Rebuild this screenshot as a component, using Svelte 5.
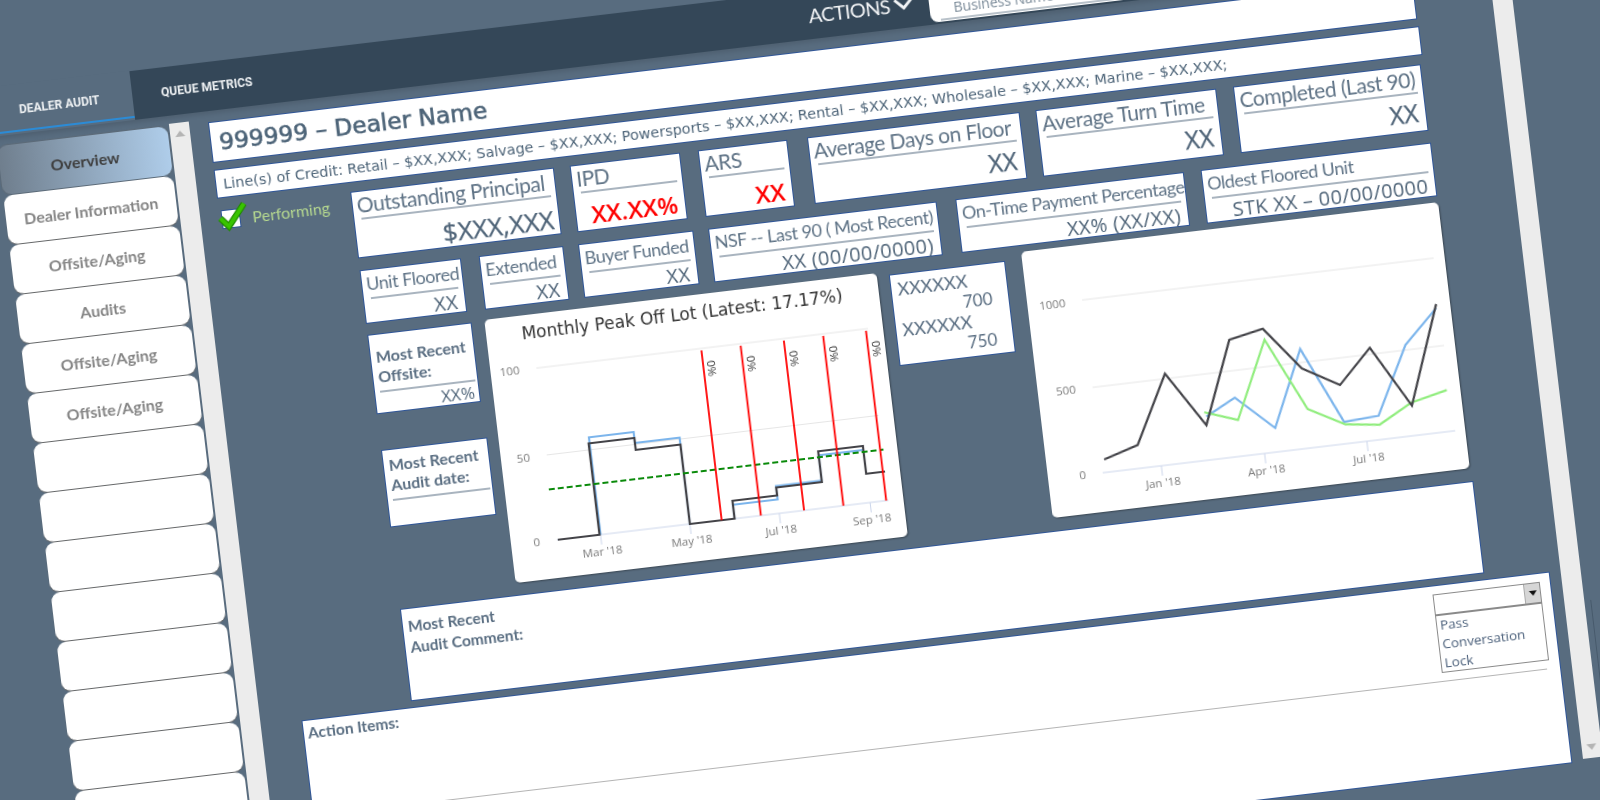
<script>
  const sideItems = ['Overview', 'Dealer Information', 'Offsite/Aging', 'Audits', 'Offsite/Aging', 'Offsite/Aging', '', '', '', '', '', '', '', '', ''];

  const topRow = [
    { title: 'Outstanding Principal', value: '$XXX,XXX', w: 205, gap: 0, size: 'lg' },
    { title: 'IPD', value: 'XX.XX%', w: 111, gap: 16, alert: true },
    { title: 'ARS', value: 'XX', w: 90, gap: 18, alert: true },
    { title: 'Average Days on Floor', value: 'XX', w: 214, gap: 20 },
    { title: 'Average Turn Time', value: 'XX', w: 182, gap: 16 },
    { title: 'Completed (Last 90)', value: 'XX', w: 189, gap: 17 }
  ];

  const secondRow = [
    { title: 'Unit Floored', value: 'XX', w: 102, gap: 0 },
    { title: 'Extended', value: 'XX', w: 85, gap: 18 },
    { title: 'Buyer Funded', value: 'XX', w: 116, gap: 15 },
    { title: 'NSF -- Last 90 ( Most Recent)', value: 'XX (00/00/0000)', w: 230, gap: 15 },
    { title: 'On-Time Payment Percentage', value: 'XX% (XX/XX)', w: 230, gap: 19 },
    { title: 'Oldest Floored Unit', value: 'STK XX – 00/00/0000', w: 232, gap: 17 }
  ];

  const redLines = [212, 251.5, 295, 334.6, 377.7];

  const peakTicks = [
    { x: 90, label: "Mar '18" },
    { x: 180, label: "May '18" },
    { x: 270, label: "Jul '18" },
    { x: 361.5, label: "Sep '18" }
  ];

  const volumeTicks = [
    { x: 114, label: "Jan '18" },
    { x: 218, label: "Apr '18" },
    { x: 321, label: "Jul '18" }
  ];

  const volumeDark = '58,216 93,205.6 128.5,138 163.6,194 196.4,112 231,105 265,149 301,170 335,136.5 370,199 406,101';
  const volumeBlue = '164.6,185.6 195,170 231.6,205 265.7,129.5 300.7,207 335.7,205 370.7,138 405.5,105';
  const volumeGreen = '163,181 195.6,192.6 231.4,116 266,190 301.7,209.6 335.7,214 369.4,196 406.4,187.6';
</script>

<div class="stage">
  <header class="topbar">
    <div class="tab active">DEALER AUDIT</div>
    <div class="darkbar">
      <div class="tab">QUEUE METRICS</div>
      <div class="actions">
        <span>ACTIONS</span>
        <svg width="22" height="14" viewBox="0 0 22 14"><path d="M2 2l9 9 9-9" fill="none" stroke="#f2f4f6" stroke-width="3" /></svg>
      </div>
      <div class="search">
        <div class="search-field">Business Name</div>
      </div>
    </div>
  </header>

  <div class="content">
    <aside class="sidebar">
      <div class="side-list">
        {#each sideItems as item, i}
          <div class="side-item" class:selected={i === 0}>{item}</div>
        {/each}
      </div>
      <div class="scroller left">
        <svg class="arrow" width="10" height="6" viewBox="0 0 10 6"><path d="M5 0l5 6H0z" fill="#b4b4b4" /></svg>
      </div>
    </aside>

    <main class="main">
      <div class="box name">999999 – Dealer Name</div>
      <div class="box credit">Line(s) of Credit: Retail – $XX,XXX; Salvage – $XX,XXX; Powersports – $XX,XXX; Rental – $XX,XXX; Wholesale – $XX,XXX; Marine – $XX,XXX;</div>

      <div class="overview">
        <div class="status">
          <div class="checkbox">
            <svg class="check" width="20" height="20" viewBox="0 0 20 20">
              <path d="M-2 7l7.6 9L23 -5" fill="none" stroke="#1f8a00" stroke-width="6.5" />
              <path d="M-2 7l7.6 9L23 -5" fill="none" stroke="#39c400" stroke-width="4" />
            </svg>
          </div>
          <span>Performing</span>
        </div>

        <div class="stats">
          <div class="row top">
            {#each topRow as t}
              <div class="tile" style:width="{t.w}px" style:margin-left="{t.gap}px">
                <div class="tile-title">{t.title}</div>
                <div class="tile-value" class:lg={t.size === 'lg'} class:alert={t.alert}>{t.value}</div>
              </div>
            {/each}
          </div>

          <div class="row second">
            {#each secondRow as t}
              <div class="tile" style:width="{t.w}px" style:margin-left="{t.gap}px">
                <div class="tile-title">{t.title}</div>
                <div class="tile-value">{t.value}</div>
              </div>
            {/each}
          </div>

          <div class="row third">
            <div class="notes">
              <div class="note offsite">
                <div class="note-title">Most Recent<br />Offsite:</div>
                <div class="note-value">XX%</div>
              </div>
              <div class="note audit">
                <div class="note-title">Most Recent<br />Audit date:</div>
              </div>
            </div>

            <div class="chart peak">
              <svg width="395" height="265" viewBox="0 0 395 265">
                <text class="chart-title" x="197" y="24" text-anchor="middle">Monthly Peak Off Lot (Latest: 17.17%)</text>
                <line class="grid" x1="46" y1="54" x2="380" y2="54" />
                <line class="grid" x1="46" y1="141.5" x2="380" y2="141.5" />
                <line class="axis" x1="46" y1="227" x2="380" y2="227" />
                <text class="tick" x="29" y="58" text-anchor="end">100</text>
                <text class="tick" x="29" y="146" text-anchor="end">50</text>
                <text class="tick" x="29" y="231" text-anchor="end">0</text>
                {#each peakTicks as t}
                  <line class="axis" x1={t.x} y1="227" x2={t.x} y2="237" />
                  <text class="tick" x={t.x} y="248" text-anchor="middle">{t.label}</text>
                {/each}
                <polyline class="series blue" points="90,227 90,129 135,129 135,140 180,140 180,227 225,227 225,213 270,213 270,199.5 316,199.5 316,174 361,174" />
                <polyline class="series dark" points="47,227 89,227 89,135 135,135 135,147 180,147 180,227 225,227 225,209 270,209 270,201 316,201 316,170 361,170 361,198 380,198" />
                <line class="target" x1="44" y1="176" x2="381" y2="176" />
                {#each redLines as x}
                  <line class="marker" x1={x} y1="56" x2={x} y2="227" />
                  <text class="marker-label" transform="translate({x + 4} 67) rotate(90)">0%</text>
                {/each}
              </svg>
            </div>

            <div class="codes">
              <div>XXXXXX</div>
              <div class="code-num">700</div>
              <div>XXXXXX</div>
              <div class="code-num">750</div>
            </div>

            <div class="chart volume">
              <svg width="420" height="268" viewBox="0 0 420 268">
                <line class="grid" x1="55" y1="55" x2="409" y2="55" />
                <line class="grid" x1="55" y1="143" x2="409" y2="143" />
                <line class="axis" x1="55" y1="229" x2="410" y2="229" />
                <text class="tick" x="38" y="60" text-anchor="end">1000</text>
                <text class="tick" x="38" y="147" text-anchor="end">500</text>
                <text class="tick" x="38" y="233" text-anchor="end">0</text>
                {#each volumeTicks as t}
                  <line class="axis" x1={t.x} y1="229" x2={t.x} y2="239" />
                  <text class="tick" x={t.x} y="250" text-anchor="middle">{t.label}</text>
                {/each}
                <polyline class="series blue" points={volumeBlue} />
                <polyline class="series green" points={volumeGreen} />
                <polyline class="series dark" points={volumeDark} />
              </svg>
            </div>
          </div>

          <div class="box comment">Most Recent<br />Audit Comment:</div>
        </div>
      </div>

      <div class="box actions-box">
        <div>Action Items:</div>
        <div class="rule"></div>
        <div class="dropdown">
          <div class="dropdown-field">
            <div class="dropdown-btn"><svg width="8" height="5" viewBox="0 0 8 5"><path d="M0 0h8L4 5z" fill="#111" /></svg></div>
          </div>
          <div class="dropdown-list">
            <div>Pass</div>
            <div>Conversation</div>
            <div>Lock</div>
          </div>
        </div>
      </div>
    </main>

    <div class="scroller right">
      <svg class="arrow down" width="10" height="6" viewBox="0 0 10 6"><path d="M0 0h10L5 6z" fill="#b4b4b4" /></svg>
    </div>
  </div>
</div>

<style>
  :global(html), :global(body) {
    margin: 0;
    overflow: hidden;
    background: #586c7f;
  }

  .stage {
    width: 1560px;
    padding-top: 86px;
    transform: rotate(-6.8deg) translateX(-30px);
    transform-origin: 0 0;
    font-family: Lato, sans-serif;
    color: #5a6e82;
    filter: blur(0.3px);
  }

  /* top bar */
  .topbar {
    display: flex;
    height: 49px;
    box-shadow: 0 3px 5px rgba(0, 0, 0, 0.12);
  }

  .tab {
    width: 150px;
    height: 47px;
    flex: none;
    display: flex;
    align-items: center;
    justify-content: center;
    padding-top: 3px;
    box-sizing: border-box;
    font: 700 12px Roboto, sans-serif;
    color: #eef1f3;
  }

  .tab.active {
    border-bottom: 2px solid #2b8bd6;
    padding: 4px 0 0 3px;
  }

  .darkbar {
    flex: 1;
    display: flex;
    background: #344758;
  }

  .actions {
    margin-left: 531px;
    width: 106px;
    flex: none;
    height: 46px;
    padding-top: 4px;
    box-sizing: border-box;
    display: flex;
    align-items: center;
    gap: 3px;
    font-size: 20px;
    letter-spacing: -0.6px;
    color: #f2f4f6;
  }

  .search {
    margin-left: 15px;
    width: 482px;
    height: 47px;
    background: #fff;
    border-radius: 0 0 8px 8px;
    box-sizing: border-box;
    padding: 24px 10px 0;
  }

  .search-field {
    border-bottom: 2px solid #b9c2ca;
    height: 20px;
    padding-left: 14px;
    font: 14px "Open Sans", sans-serif;
    color: #7a8a98;
  }

  .content {
    display: flex;
    align-items: stretch;
  }

  /* left menu */
  .sidebar {
    display: flex;
    width: 193px;
    margin-left: 10px;
    margin-top: 8px;
    flex: none;
  }

  .side-list {
    width: 171px;
    padding-top: 2px;
    margin-right: 2px;
  }

  .side-item {
    height: 49px;
    margin-bottom: 1px;
    background: #fff;
    border-radius: 9px;
    box-shadow: 0 1px 1px #666;
    display: flex;
    align-items: center;
    justify-content: center;
    font-size: 16px;
    font-weight: 700;
    color: #858585;
  }

  .side-item.selected {
    background: linear-gradient(90deg, #6f7e8d, #afcdea);
    color: #3f3f3f;
    box-shadow: 0 0 2px #666;
  }

  .scroller {
    width: 20px;
    flex: none;
    background: #ececec;
    position: relative;
  }

  .arrow {
    position: absolute;
    left: 5px;
    top: 8px;
  }

  .arrow.down {
    top: auto;
    bottom: 8px;
  }

  .scroller.right {
    margin: 8px 0 3px 11px;
  }

  .scroller.right::after {
    content: '';
    position: absolute;
    left: 26px;
    top: 641px;
    width: 1px;
    height: 200px;
    background: #46596b;
  }

  /* main column */
  .main {
    width: 1279px;
    flex: none;
    margin-left: 19px;
    padding-top: 11px;
  }

  .box {
    background: #fff;
    border: 1px solid #2f5597;
    box-sizing: border-box;
  }

  .name {
    width: 1213px;
    height: 41px;
    margin-bottom: 7px;
    padding-left: 8px;
    font: 23.4px/40px "DejaVu Sans", sans-serif;
    -webkit-text-stroke: 0.6px #4d6478;
    color: #4d6478;
  }

  .credit {
    width: 1214px;
    height: 29px;
    margin-bottom: 9px;
    padding-left: 7px;
    font: 14.45px/28px "DejaVu Sans", sans-serif;
    color: #4d6478;
    white-space: nowrap;
  }

  .overview {
    display: flex;
  }

  .status {
    width: 133px;
    flex: none;
    display: flex;
    align-items: flex-start;
    gap: 12px;
    padding-top: 3px;
    font-size: 16px;
    line-height: 20px;
    color: #b5d88f;
  }

  .status span {
    white-space: nowrap;
  }

  .checkbox {
    width: 19px;
    height: 19px;
    margin-left: 2px;
    background: #fff;
    border: 1px solid #2f5597;
    box-sizing: border-box;
    position: relative;
    flex: none;
  }

  .check {
    position: absolute;
    left: 0;
    top: 0;
    overflow: visible;
  }

  .stats {
    width: 1081px;
  }

  .row {
    display: flex;
    align-items: flex-start;
  }

  .row.second {
    margin-top: 12px;
  }

  .tile {
    background: #fff;
    border: 1px solid #2f5597;
    box-sizing: border-box;
    flex: none;
    padding: 0 5px 0 7px;
  }

  .top .tile {
    height: 67px;
  }

  .second .tile {
    height: 54px;
  }

  .tile-title {
    white-space: nowrap;
    text-indent: -3px;
    font-size: 21px;
    letter-spacing: -0.45px;
    line-height: 25px;
    height: 26px;
    border-bottom: 2px solid #a9b4bf;
    color: #5f7386;
  }

  .second .tile-title {
    font-size: 18px;
    letter-spacing: -0.45px;
    line-height: 26px;
    height: 27px;
  }

  .tile-value {
    text-align: right;
    padding-right: 2px;
    white-space: nowrap;
    font: 500 25px/30px "Open Sans", sans-serif;
    -webkit-text-stroke: 0.25px #4f6478;
    color: #4f6478;
    margin-top: 3px;
  }

  .tile-value.lg {
    font-size: 26px;
    padding-right: 0;
    margin-top: 7px;
  }

  .tile-value.alert {
    color: #f00;
    -webkit-text-stroke: 0;
    font-weight: 600;
    font-size: 24px;
    margin-top: 7px;
  }

  .second .tile-value {
    font-size: 20px;
    -webkit-text-stroke: 0;
    letter-spacing: 0.4px;
    line-height: 24px;
    margin-top: 1px;
  }

  .row.third {
    margin-top: 6px;
  }

  .notes {
    width: 118px;
    flex: none;
    margin-top: 5px;
  }

  .note {
    background: #fff;
    border: 1px solid #2f5597;
    box-sizing: border-box;
    padding: 0 2px 0 5px;
  }

  .note.offsite {
    width: 105px;
    height: 80px;
    padding-top: 12px;
  }

  .note.audit {
    width: 107px;
    height: 78px;
    margin-top: 36px;
    padding-top: 5px;
  }

  .note-title {
    font-size: 16px;
    font-weight: 700;
    line-height: 20px;
    padding-bottom: 4px;
    border-bottom: 2px solid #a9b4bf;
    color: #5a6e82;
  }

  .note-value {
    text-align: right;
    padding-right: 2px;
    font: 500 17px/22px "Open Sans", sans-serif;
    color: #52677b;
  }

  .chart {
    background: #fff;
    border-radius: 5px;
    box-shadow: 1px 1px 2px rgba(0, 0, 0, 0.35);
    flex: none;
  }

  .chart svg {
    display: block;
  }

  .chart.peak {
    width: 395px;
    height: 265px;
    margin-top: 4px;
  }

  .chart.volume {
    width: 420px;
    height: 268px;
    margin-left: 17px;
  }

  .codes {
    width: 117px;
    height: 92px;
    margin-left: 12px;
    margin-top: 7px;
    background: #fff;
    border: 1px solid #2f5597;
    box-sizing: border-box;
    flex: none;
    padding: 4px 16px 0 6px;
    font-size: 18px;
    line-height: 20px;
    color: #5a6e82;
  }

  .code-num {
    text-align: right;
    line-height: 21px;
    font-size: 17px;
  }

  .chart-title {
    font: 17px "DejaVu Sans", sans-serif;
    fill: #333;
  }

  .grid {
    stroke: #e6e6e6;
  }

  .axis {
    stroke: #ccd6eb;
  }

  .tick {
    font: 11.5px "Open Sans", sans-serif;
    fill: #7a7a7a;
  }

  .series {
    fill: none;
    stroke-width: 2.2;
    stroke-linejoin: miter;
  }

  .series.dark {
    stroke: #434348;
  }

  .series.blue {
    stroke: #7cb5ec;
  }

  .series.green {
    stroke: #90ed7d;
  }

  .target {
    stroke: #0a8a0a;
    stroke-width: 2;
    stroke-dasharray: 6 3;
  }

  .marker {
    stroke: #f00;
    stroke-width: 1.8;
  }

  .marker-label {
    font: 11.5px "Open Sans", sans-serif;
    fill: #333;
  }

  .comment {
    height: 93px;
    margin-top: 12px;
    width: 1081px;
    padding: 7px 0 0 5px;
    font-size: 15.5px;
    font-weight: 700;
    line-height: 21px;
    color: #5a6e82;
  }

  /* bottom box */
  .actions-box {
    position: relative;
    width: 1257px;
    height: 193px;
    margin: 6px 0 0 22px;
    padding: 2px 0 0 4px;
    font-size: 15.5px;
    font-weight: 700;
    line-height: 20px;
    color: #5a6e82;
  }

  .rule {
    margin: 73px 13px 0 10px;
    border-top: 1px solid #b4b4b4;
  }

  .dropdown {
    position: absolute;
    right: 10px;
    top: 8px;
    width: 108px;
    font: 13.5px/19px "Open Sans", sans-serif;
    color: #4a5f7a;
  }

  .dropdown-field {
    height: 22px;
    box-sizing: border-box;
    border: 1px solid #8a8a8a;
    border-bottom-width: 2px;
    display: flex;
    justify-content: flex-end;
    background: #fff;
  }

  .dropdown-btn {
    width: 15px;
    background: #d6d6d6;
    border-left: 1px solid #aaa;
    display: flex;
    align-items: center;
    justify-content: center;
  }

  .dropdown-list {
    height: 57px;
    box-sizing: border-box;
    border: 1px solid #8a8a8a;
    border-top: 0;
    background: #fff;
    padding-left: 3px;
  }
</style>
